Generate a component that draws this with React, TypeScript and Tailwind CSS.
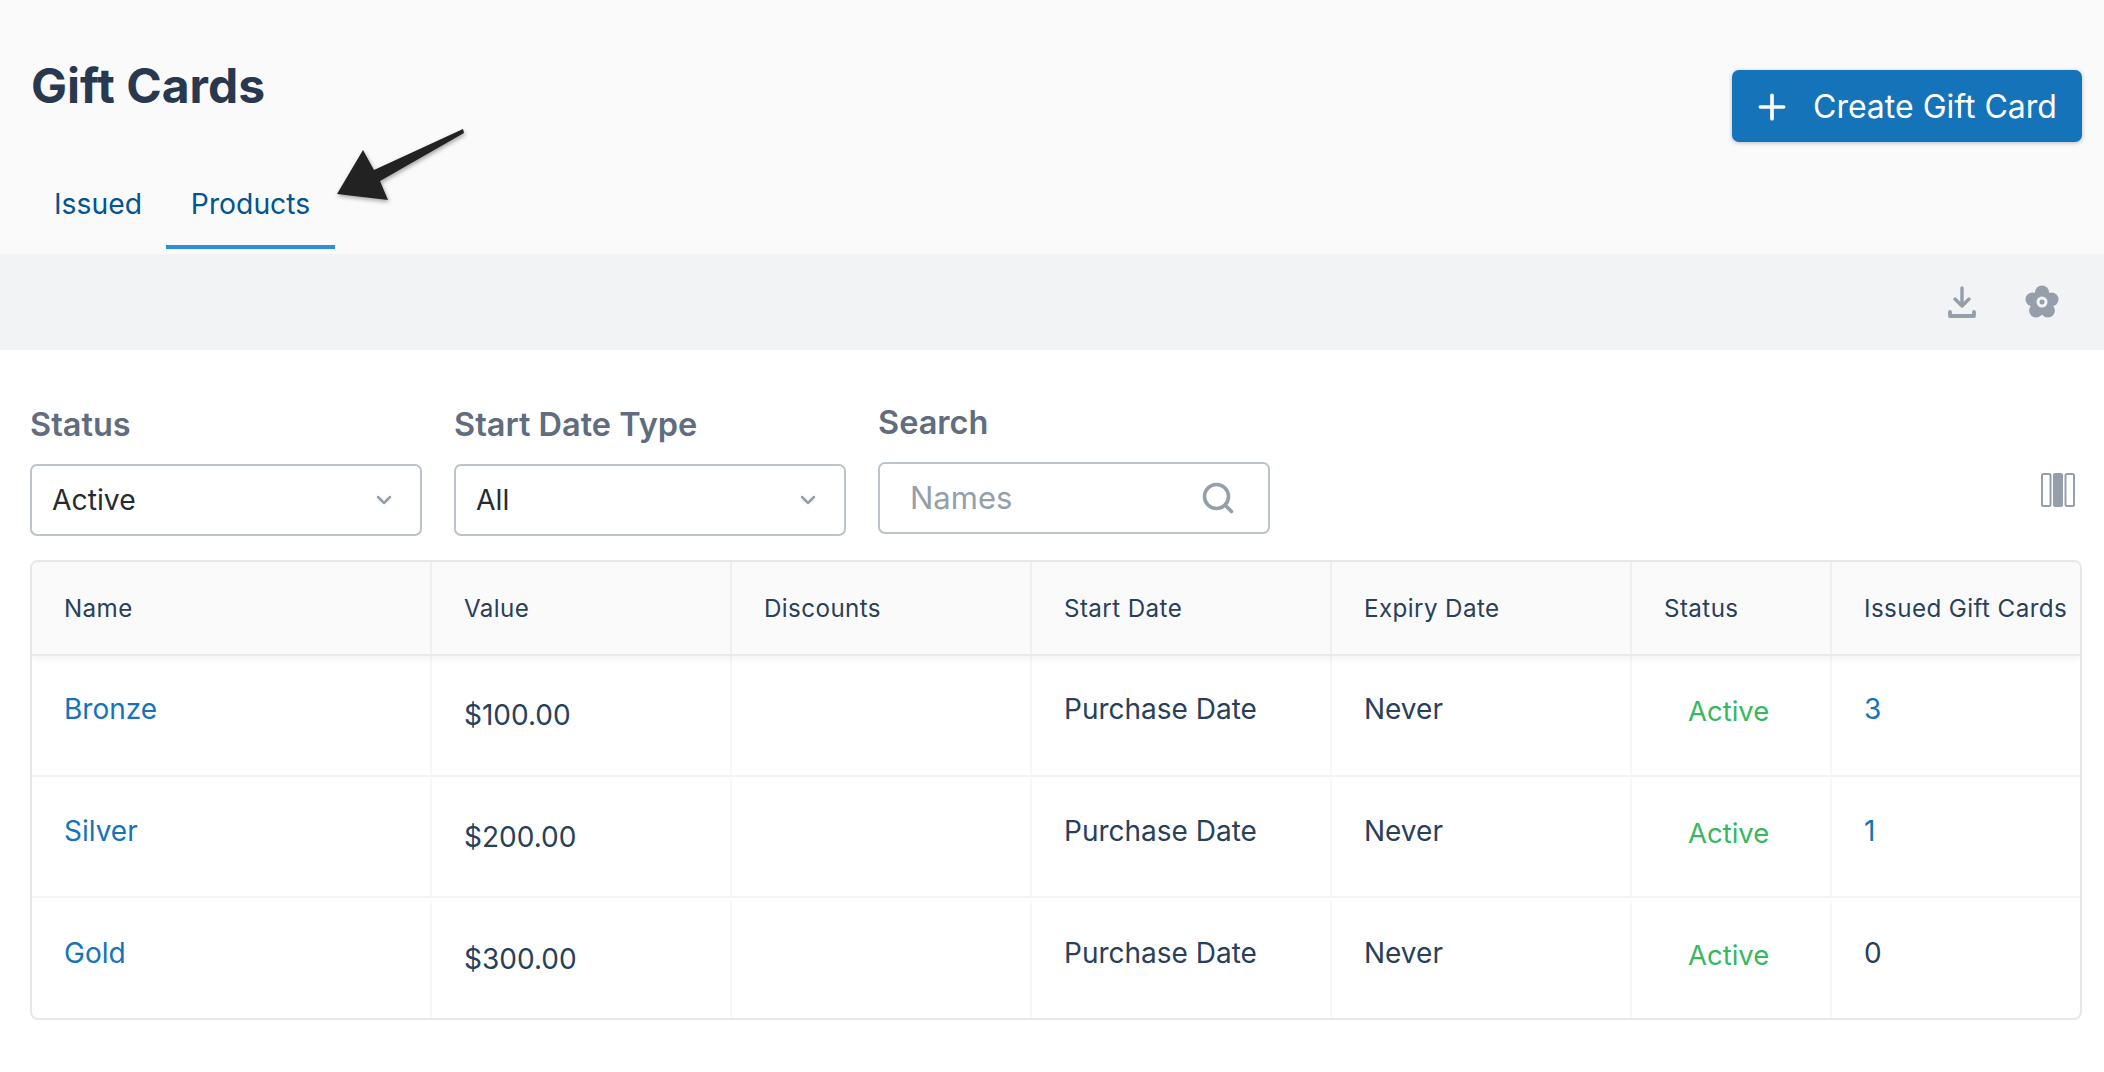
import { ChevronDown, Plus, Search } from 'lucide-react';

const columns = 'grid grid-cols-[400px_300px_300px_300px_300px_200px_1fr]';

const products = [
  { name: 'Bronze', value: '$100.00', issued: '3' },
  { name: 'Silver', value: '$200.00', issued: '1' },
  { name: 'Gold', value: '$300.00', issued: '0' },
];

const headers = ['Name', 'Value', 'Discounts', 'Start Date', 'Expiry Date', 'Status', 'Issued Gift Cards'];

function Arrow() {
  return (
    <svg className="absolute left-[330px] top-[122px] drop-shadow-[1px_2px_2px_rgba(0,0,0,0.35)]" width="140" height="84" viewBox="330 122 140 84">
      <path d="M337 194 L363 150 L374 170 L463 129 L464 133 L380 181 L388 200 Z" fill="#222222" />
    </svg>
  );
}

function FlowerCog() {
  return (
    <svg width="34" height="34" viewBox="0 0 34 34" fill="#959eab">
      <circle cx="17" cy="7.5" r="7" />
      <circle cx="26.5" cy="14.4" r="7" />
      <circle cx="22.9" cy="25.6" r="7" />
      <circle cx="11.1" cy="25.6" r="7" />
      <circle cx="7.5" cy="14.4" r="7" />
      <circle cx="17" cy="17.5" r="12" />
      <circle cx="17" cy="17" r="5.5" fill="#f2f3f5" />
      <circle cx="17" cy="17" r="2.5" />
    </svg>
  );
}

function SelectBox({ label, value }: { label: string; value: string }) {
  return (
    <div className="w-[392px]">
      <div className="h-[40px] text-[32.5px] leading-[40px] font-semibold text-[#5f6d7e]">{label}</div>
      <div className="mt-[19px] h-[72px] flex items-center justify-between pl-[20px] pr-[24px] bg-white border-2 border-[#bcc3ca] rounded-[7px]">
        <span className="text-[28.3px] text-[#252b30]">{value}</span>
        <ChevronDown className="text-[#959eab]" size={24} strokeWidth={2.5} />
      </div>
    </div>
  );
}

export default function App() {
  return (
    <div className="relative min-h-screen bg-white font-['Inter',sans-serif] text-[#29405a]">
      <header className="h-[254px] bg-[#fafafb] flex justify-between pl-[31px] pr-[22px]">
        <div>
          <h1 className="mt-[58px] text-[48px] leading-[56px] font-bold text-[#28394f]">Gift Cards</h1>
          <nav className="mt-[67px] flex">
            <a className="h-[68px] pl-[23px] pr-[24px] pt-[5px] text-[28.3px] leading-[36px] text-[#02558f]">Issued</a>
            <a className="h-[68px] w-[169px] text-center pt-[5px] text-[28.3px] leading-[36px] text-[#02558f] border-b-4 border-[#2a90dc]">Products</a>
          </nav>
        </div>
        <button className="mt-[70px] h-[72px] w-[350px] flex items-center pl-[20px] pt-[2px] gap-[21px] bg-[#1573b9] rounded-[7px] shadow-[0_1px_4px_rgba(50,70,100,0.35)] text-white text-[32px]">
          <Plus size={40} strokeWidth={2.2} />
          Create Gift Card
        </button>
      </header>

      <Arrow />

      <div className="h-[96px] bg-[#f2f3f5] flex justify-end items-center gap-[48px] pr-[45px]">
        <svg width="30" height="32" viewBox="0 0 30 32" fill="none" stroke="#959eab" strokeWidth="3.4" strokeLinecap="round" strokeLinejoin="round">
          <path d="M15 2 V19 M8 13 L15 20 L22 13" />
          <path d="M3 26 V30 H27 V26" strokeWidth="3.8" />
        </svg>
        <FlowerCog />
      </div>

      <main className="pl-[30px] pr-[22px]">
        <div className="pt-[55px] flex items-start gap-[32px] relative">
          <SelectBox label="Status" value="Active" />
          <SelectBox label="Start Date Type" value="All" />
          <div className="w-[392px] -mt-[2px]">
            <div className="h-[40px] text-[32.5px] leading-[40px] font-semibold text-[#5f6d7e]">Search</div>
            <div className="mt-[19px] h-[72px] flex items-center justify-between pl-[30px] pr-[32px] bg-white border-2 border-[#bcc3ca] rounded-[7px]">
              <span className="pt-[1px] text-[31px] text-[#959eab]">Names</span>
              <Search className="text-[#959eab]" size={36} strokeWidth={2.4} />
            </div>
          </div>
          <svg className="absolute right-[7px] top-[123px]" width="34" height="34" viewBox="0 0 34 34" fill="none" stroke="#959eab" strokeWidth="2">
            <rect x="1" y="1" width="8.5" height="32" rx="1.5" />
            <rect x="24.5" y="1" width="8.5" height="32" rx="1.5" />
            <rect x="12" y="0" width="10" height="34" rx="2" fill="#959eab" stroke="none" />
          </svg>
        </div>

        <div className="mt-[24px] border-2 border-[#e6e7e9] rounded-[8px] overflow-hidden">
          <div className={`${columns} h-[94px] bg-[#fafafa] border-b-2 border-[#e9eaec] shadow-[0_3px_8px_rgba(40,50,70,0.06)] relative`}>
            {headers.map((h) => (
              <div key={h} className="flex items-center pl-[32px] pt-[2px] text-[24.2px] tracking-[0.4px] border-r-2 last:border-r-0 border-[#eeeff1]">
                {h}
              </div>
            ))}
          </div>
          {products.map((p) => (
            <div key={p.name} className={`${columns} h-[121px] last:h-[120px] text-[28px] border-b-2 last:border-b-0 border-[#f3f3f4] [&:nth-child(3)]:pt-[1px] last:pt-[2px]`}>
              <div className="pl-[32px] pt-[32px] text-[#1573b9] border-r-2 border-[#f8f8f9]">{p.name}</div>
              <div className="pl-[32px] pt-[38px] border-r-2 border-[#f8f8f9]">{p.value}</div>
              <div className="border-r-2 border-[#f8f8f9]" />
              <div className="pl-[32px] pt-[32px] border-r-2 border-[#f8f8f9]">Purchase Date</div>
              <div className="pl-[32px] pt-[32px] border-r-2 border-[#f8f8f9]">Never</div>
              <div className="pl-[56px] pt-[35px] text-[27.5px] text-[#36b85f] border-r-2 border-[#f8f8f9]">Active</div>
              <div className={`pl-[32px] pt-[32px] ${p.issued === '0' ? '' : 'text-[#1573b9]'}`}>{p.issued}</div>
            </div>
          ))}
        </div>
      </main>
    </div>
  );
}
